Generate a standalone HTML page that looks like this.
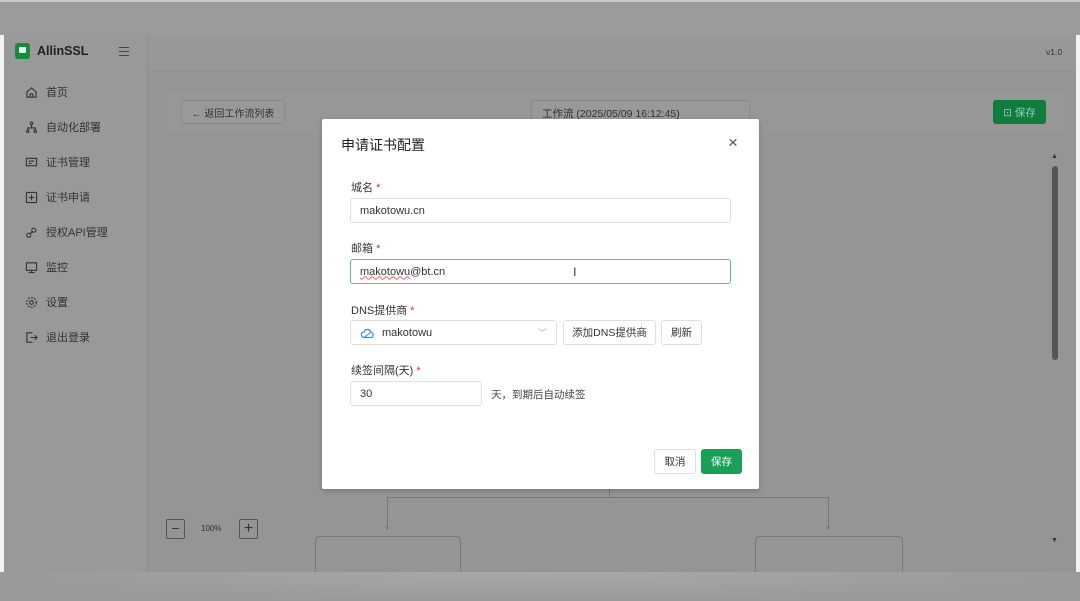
<!DOCTYPE html>
<html><head><meta charset="utf-8"><style>
*{box-sizing:border-box;margin:0;padding:0}
html,body{width:1080px;height:601px;overflow:hidden;background:#f2f2f2;font-family:"Liberation Sans","Noto Sans CJK SC",sans-serif}
body{position:relative}
.abs{position:absolute}
.nav{position:absolute;left:25px;font-size:11px;color:#333;display:flex;align-items:center;gap:8px}
.nav svg{width:13px;height:13px}
.lbl{font-size:11px;color:#333}
.lbl b{color:#d03050;font-weight:normal}
.inp{border:1px solid #e0e0e0;border-radius:3px;font-size:11px;color:#333;padding-left:9px;display:flex;align-items:center}
.btn{border:1px solid #e0e0e0;border-radius:3px;font-size:10.5px;color:#333;display:flex;align-items:center;justify-content:center;background:#fff}
</style></head><body>
<div class="abs" style="left:0;top:0;width:1080px;height:35px;background-color:#9b9b9b;border-top:2px solid #c8ccd2"></div>
<div class="abs" style="left:4px;top:35px;width:1072px;height:537px;background-color:#959595"></div>
<div class="abs" style="left:4px;top:35px;width:144px;height:537px;background-color:#999999;border-right:1px solid #8e8e8e"></div>
<div class="abs" style="left:148px;top:35px;width:928px;height:36px;background-color:#989898;border-bottom:1px solid #909090"></div>
<div class="abs" style="left:1076px;top:35px;width:4px;height:537px;background-color:#f2f2f2"></div>
<!-- logo -->
<div class="abs" style="left:15px;top:43px;width:15px;height:16px;background-color:#1a8a3a;border-radius:3px"></div>
<div class="abs" style="left:19px;top:47px;width:7px;height:6px;background-color:#dfe;border-radius:1px"></div>
<div class="abs" style="left:37px;top:44px;font-size:12.5px;font-weight:bold;color:#222">AllinSSL</div>
<div class="abs" style="left:119px;top:47px;width:10px;height:9px;border-top:1px solid #444;border-bottom:1px solid #444"><div style="margin-top:3px;border-top:1px solid #444"></div></div>
<div class="abs" style="left:1046px;top:47px;font-size:8.5px;color:#333">v1.0</div>
<!-- nav -->
<div class="nav" style="top:84px"><svg viewBox="0 0 14 14" fill="none" stroke="#333" stroke-width="1.2"><path d="M2 6.5L7 2l5 4.5V12H2z M5.5 12V8.5h3V12"/></svg>首页</div>
<div class="nav" style="top:119px"><svg viewBox="0 0 14 14" fill="none" stroke="#333" stroke-width="1.2"><circle cx="7" cy="2.5" r="1.3"/><path d="M7 4v3M3 9.5V7.5h8v2"/><circle cx="3" cy="11" r="1.3"/><circle cx="11" cy="11" r="1.3"/></svg>自动化部署</div>
<div class="nav" style="top:154px"><svg viewBox="0 0 14 14" fill="none" stroke="#333" stroke-width="1.2"><rect x="1.5" y="2.5" width="11" height="8"/><path d="M4 5.5h6M4 8h3"/></svg>证书管理</div>
<div class="nav" style="top:189px"><svg viewBox="0 0 14 14" fill="none" stroke="#333" stroke-width="1.2"><rect x="1.5" y="1.5" width="11" height="11" rx="1"/><path d="M7 4v6M4 7h6"/></svg>证书申请</div>
<div class="nav" style="top:224px"><svg viewBox="0 0 14 14" fill="none" stroke="#333" stroke-width="1.2"><circle cx="4" cy="10" r="2.2"/><circle cx="9.5" cy="4.5" r="2.2"/><path d="M5.5 8.5l2.5-2.5"/></svg>授权API管理</div>
<div class="nav" style="top:259px"><svg viewBox="0 0 14 14" fill="none" stroke="#333" stroke-width="1.2"><path d="M1.5 2h11v8h-11z M7 10v2.5M4 12.5h6"/></svg>监控</div>
<div class="nav" style="top:294px"><svg viewBox="0 0 14 14" fill="none" stroke="#333" stroke-width="1.2"><circle cx="7" cy="7" r="2"/><circle cx="7" cy="7" r="5.2" stroke-dasharray="2.2 1.2"/></svg>设置</div>
<div class="nav" style="top:329px"><svg viewBox="0 0 14 14" fill="none" stroke="#333" stroke-width="1.2"><path d="M8 2H2v10h6M6 7h7M10.5 4.5L13 7l-2.5 2.5"/></svg>退出登录</div>
<!-- main bg content -->
<div class="abs" style="left:166px;top:90px;width:900px;height:44px;background-color:#979797"></div>
<div class="abs" style="left:181px;top:100px;width:104px;height:24px;border:1px solid #8a8a8a;border-radius:3px;font-size:10px;color:#333;display:flex;align-items:center;justify-content:center;background-color:#999">← 返回工作流列表</div>
<div class="abs" style="left:531px;top:100px;width:219px;height:24px;border:1px solid #8a8a8a;border-radius:2px;font-size:10.5px;color:#333;padding:5px 10px;background-color:#999">工作流 (2025/05/09 16:12:45)</div>
<div class="abs" style="left:993px;top:100px;width:53px;height:24px;background-color:#0f7d3b;border-radius:3px;font-size:10.5px;color:#9cc;display:flex;align-items:center;justify-content:center">⊡ 保存</div>
<div class="abs" style="left:1051px;top:153px;font-size:7px;color:#333">▲</div>
<div class="abs" style="left:1052px;top:166px;width:6px;height:194px;background-color:#555;border-radius:3px"></div>
<div class="abs" style="left:1051px;top:537px;font-size:7px;color:#333">▼</div>
<!-- tree -->
<div class="abs" style="left:609px;top:489px;width:1px;height:9px;background-color:#777"></div>
<div class="abs" style="left:387px;top:497px;width:442px;height:1px;background-color:#777"></div>
<div class="abs" style="left:387px;top:497px;width:1px;height:32px;background-color:#777"></div>
<div class="abs" style="left:828px;top:497px;width:1px;height:32px;background-color:#777"></div>
<div class="abs" style="left:384px;top:526px;font-size:6px;color:#777">▼</div>
<div class="abs" style="left:825px;top:526px;font-size:6px;color:#777">▼</div>
<div class="abs" style="left:315px;top:536px;width:146px;height:40px;border:1px solid #7a7a7a;border-bottom:none;border-radius:4px 4px 0 0"></div>
<div class="abs" style="left:755px;top:536px;width:148px;height:40px;border:1px solid #7a7a7a;border-bottom:none;border-radius:4px 4px 0 0"></div>
<div class="abs" style="left:0;top:572px;width:1080px;height:29px;background-color:#9d9d9d;background-image:radial-gradient(ellipse at 50% 0,#a9a9a9,#9a9a9a 70%)"></div>
<div class="abs" style="left:166px;top:519px;width:19px;height:20px;border:1px solid #555;border-radius:2px;font-size:14px;color:#333;text-align:center;line-height:17px">−</div>
<div class="abs" style="left:201px;top:524px;font-size:8px;color:#333">100%</div>
<div class="abs" style="left:239px;top:519px;width:19px;height:20px;border:1px solid #555;border-radius:2px;font-size:16px;color:#333;text-align:center;line-height:17px">+</div>
<!-- modal -->
<div class="abs" style="left:322px;top:119px;width:437px;height:370px;background-color:#fff;border-radius:2px;box-shadow:0 2px 6px rgba(0,0,0,.2)">
  <div class="abs" style="left:19px;top:16px;font-size:14px;color:#222">申请证书配置</div>
  <div class="abs" style="left:406px;top:14px;font-size:17px;color:#555">×</div>
  <div class="abs lbl" style="left:29px;top:60px">城名 <b>*</b></div>
  <div class="abs inp" style="left:28px;top:79px;width:381px;height:25px">makotowu.cn</div>
  <div class="abs lbl" style="left:29px;top:121px">邮箱 <b>*</b></div>
  <div class="abs inp" style="left:28px;top:140px;width:381px;height:25px;border:1.5px solid #5cbf82"><span style="text-decoration:underline wavy #e66;text-decoration-thickness:1px">makotowu</span>@bt.cn<span style="margin-left:128px;font-size:12px">I</span></div>
  <div class="abs lbl" style="left:29px;top:183px">DNS提供商 <b>*</b></div>
  <div class="abs inp" style="left:28px;top:201px;width:207px;height:25px"><svg width="14" height="12" viewBox="0 0 14 12" style="margin-right:8px"><path d="M3.5 10.5h7a2.5 2.5 0 0 0 .3-5A3.5 3.5 0 0 0 4 5a2.8 2.8 0 0 0-.5 5.5z" fill="none" stroke="#3a8fd8" stroke-width="1.3"/><path d="M4 10.5L10 6" stroke="#3cb0a0" stroke-width="1.2"/></svg>makotowu<span style="margin-left:auto;margin-right:9px;color:#aaa;font-size:9px">﹀</span></div>
  <div class="abs btn" style="left:241px;top:201px;width:93px;height:25px">添加DNS提供商</div>
  <div class="abs btn" style="left:339px;top:201px;width:41px;height:25px">刷新</div>
  <div class="abs lbl" style="left:29px;top:243px">续签间隔(天) <b>*</b></div>
  <div class="abs inp" style="left:28px;top:262px;width:132px;height:25px">30</div>
  <div class="abs" style="left:169px;top:268px;font-size:10.5px;color:#444">天，到期后自动续签</div>
  <div class="abs btn" style="left:332px;top:330px;width:42px;height:25px">取消</div>
  <div class="abs btn" style="left:379px;top:330px;width:41px;height:25px;background-color:#18a058;border-color:#18a058;color:#fff">保存</div>
</div>
</body></html>
